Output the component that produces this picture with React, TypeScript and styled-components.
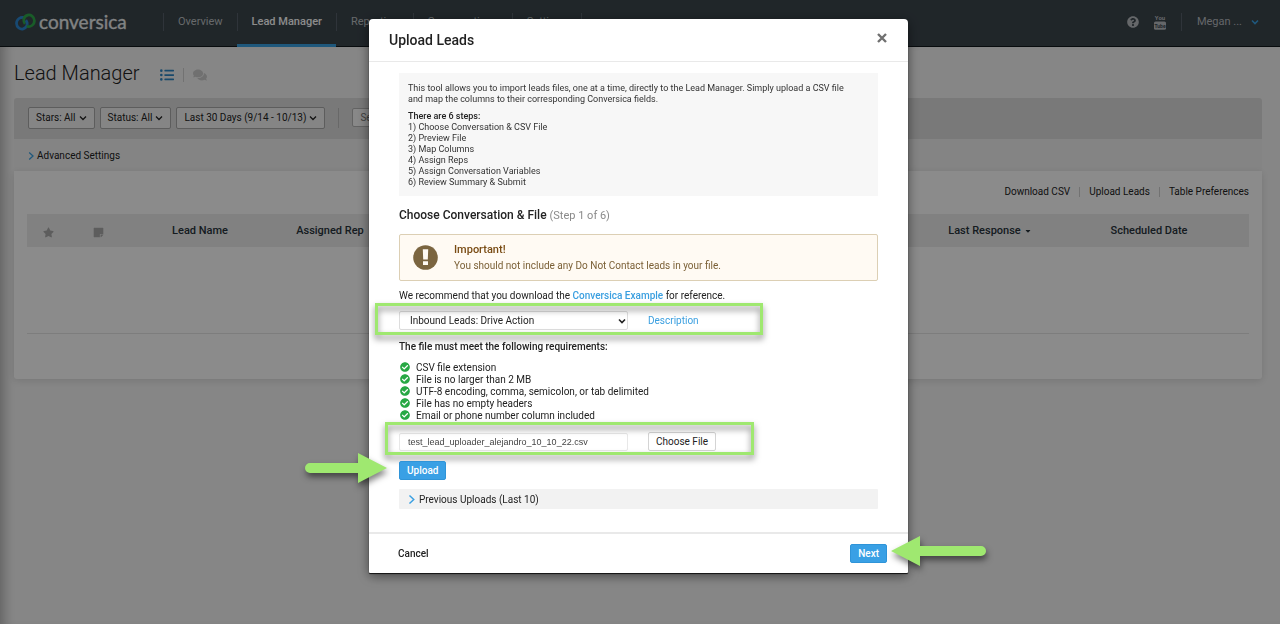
import React from "react";
import styled, { createGlobalStyle, css } from "styled-components";
import {
  FaCaretDown,
  FaCheckCircle,
  FaComments,
  FaListUl,
  FaQuestionCircle,
  FaStar,
  FaStickyNote,
} from "react-icons/fa";

const GlobalStyle = createGlobalStyle`
  *, *::before, *::after { box-sizing: border-box; }
  body {
    margin: 0;
    background: #f5f5f5;
    color: #222;
    font: 10px/12px Roboto, "Liberation Sans", sans-serif;
  }
  button, input, select { font: inherit; color: inherit; margin: 0; }
  button { cursor: pointer; }
  a { color: inherit; text-decoration: none; }
  h1, h2, h3, p, ol, ul { margin: 0; padding: 0; list-style: none; }
  svg { display: block; }
`;

/* ---------- page ---------- */

const Page = styled.div`
  min-height: 100vh;
  display: flex;
  flex-direction: column;
`;

const TopBar = styled.header`
  display: flex;
  align-items: center;
  height: 47px;
  padding: 0 21px 0 15px;
  background: #3b454c;
  border-bottom: 1px solid #10161b;
`;

const Brand = styled.a`
  display: flex;
  align-items: center;
  gap: 3px;
  width: 148px;
  padding-bottom: 3px;
  font-family: Lato, sans-serif;
  font-size: 19px;
  line-height: 24px;
  color: #eceeef;
  -webkit-text-stroke: 0.3px #eceeef;
`;

const Nav = styled.nav`
  display: flex;
  align-self: stretch;
  flex: 1;
`;

const NavLink = styled.a<{ $active?: boolean }>`
  position: relative;
  display: flex;
  align-items: center;
  padding: 0 14px 2px 15px;
  font-size: 11px;
  color: #bcc0c3;
  &::before {
    content: "";
    position: absolute;
    left: 0;
    top: 13px;
    height: 18px;
    border-left: 1px solid #56606a;
  }
  ${(p) =>
    p.$active &&
    css`
      color: #fff;
      font-weight: 500;
      &::after {
        content: "";
        position: absolute;
        inset: auto 0 -1px 0;
        height: 3px;
        background: #3aa0e2;
      }
    `}
`;

const NavEnd = styled.span`
  align-self: flex-start;
  margin-top: 13px;
  height: 18px;
  border-left: 1px solid #56606a;
`;

const Tools = styled.div`
  display: flex;
  align-items: center;
  gap: 15px;
  padding-bottom: 2px;
  color: #b8bcc0;
  font-size: 11px;
`;

const IconLink = styled.a<{ $color?: string }>`
  display: block;
  color: ${(p) => p.$color ?? "inherit"};
`;

const Rule = styled.span<{ $h?: number; $color?: string }>`
  width: 1px;
  height: ${(p) => p.$h ?? 14}px;
  background: ${(p) => p.$color ?? "#cfcfcf"};
`;

const UserButton = styled.button`
  display: flex;
  align-items: center;
  gap: 9px;
  padding: 0;
  border: 0;
  background: none;
`;

const Main = styled.main`
  flex: 1;
  padding: 0 18px 40px 14px;
  box-shadow: inset 12px 0 12px -8px rgba(0, 0, 0, 0.28);
`;

const TitleRow = styled.div`
  display: flex;
  align-items: center;
  gap: 9px;
  height: 51px;
`;

const PageTitle = styled.h1`
  margin-right: 11px;
  font-size: 20px;
  line-height: 24px;
  font-weight: 300;
  color: #222;
`;

const ViewIcons = styled.div`
  display: flex;
  align-items: center;
  gap: 9px;
  padding-top: 5px;
`;

const FilterBar = styled.div`
  display: flex;
  align-items: center;
  gap: 5px;
  height: 41px;
  padding: 0 14px 2px;
  border-radius: 3px 3px 0 0;
  background: #dcdcdc;
`;

const FilterButton = styled.button`
  display: flex;
  align-items: center;
  gap: 3px;
  height: 22px;
  padding: 0 7px;
  border: 1px solid #a9a9a9;
  border-radius: 2px;
  background: #f3f3f3;
  white-space: nowrap;
`;

const FilterRule = styled(Rule)`
  margin: 0 8px;
`;

const SearchInput = styled.input`
  width: 180px;
  height: 19px;
  padding: 0 7px;
  border: 1px solid #b5b5b5;
  border-radius: 2px;
  background: #f7f7f7;
`;

const AdvancedRow = styled.div`
  display: flex;
  align-items: center;
  height: 32px;
  padding: 2px 13px 0;
  background: #f1f1f1;
`;

const Disclosure = styled.button<{ $bar?: boolean }>`
  display: flex;
  align-items: center;
  gap: 2px;
  padding: 0;
  border: 0;
  background: none;
  ${(p) =>
    p.$bar &&
    css`
      width: 100%;
      height: 20px;
      padding: 1px 8px 0;
      gap: 3px;
      background: #f2f2f2;
      border-radius: 1px;
    `}
`;

const Panel = styled.section`
  height: 208px;
  padding: 0 13px;
  border-radius: 0 0 3px 3px;
  background: #fefefe;
  box-shadow: 0 2px 8px rgba(0, 0, 0, 0.12);
`;

const PanelLinks = styled.div`
  display: flex;
  justify-content: flex-end;
  align-items: center;
  gap: 9px;
  height: 43px;
  padding-bottom: 2px;
`;

const LeadTable = styled.table`
  width: 100%;
  table-layout: fixed;
  border-collapse: collapse;
`;

const HeadCell = styled.th<{ $w?: number }>`
  width: ${(p) => (p.$w ? `${p.$w}px` : "auto")};
  height: 33px;
  padding: 0;
  background: #ececec;
  font-size: 11px;
  font-weight: 500;
  color: #28333b;
  white-space: nowrap;
  svg { margin: 3px auto 0; color: #aaa; }
`;

const SortLabel = styled.span`
  display: inline-flex;
  align-items: center;
  gap: 3px;
  svg { margin: 0; color: #28333b; }
`;

const EmptyCell = styled.td`
  height: 86px;
  padding: 0;
  border-bottom: 1px solid #e4e4e4;
`;

/* ---------- dialog ---------- */

const Backdrop = styled.div`
  position: fixed;
  inset: 0;
  overflow: auto;
  display: flex;
  justify-content: center;
  align-items: flex-start;
  padding: 19px 3px 19px 0;
  background: rgba(0, 0, 0, 0.45);
`;

const Dialog = styled.div`
  width: 539px;
  border-radius: 4px 4px 1px 1px;
  background: #fff;
  box-shadow: 0 1px 1px #111, 0 3px 12px rgba(0, 0, 0, 0.5);
`;

const DialogHead = styled.div`
  display: flex;
  align-items: center;
  justify-content: space-between;
  height: 43px;
  padding: 0 21px 0 20px;
  border-bottom: 1px solid #e9e9e9;
`;

const DialogTitle = styled.h2`
  font-size: 14px;
  line-height: 16px;
  font-weight: 500;
`;

const CloseButton = styled.button`
  padding: 0 0 4px;
  border: 0;
  background: none;
  color: #707070;
`;

const DialogBody = styled.div`
  padding: 11px 30px 23px;
`;

const Intro = styled.div`
  padding: 10px 9px 8px;
  background: #f7f7f7;
  font-size: 9px;
  line-height: 11px;
  color: #333;
  p { margin-bottom: 6px; }
  strong { font-weight: 500; color: #222; }
`;

const StepHeading = styled.h3`
  margin: 12px 0 11px;
  font-size: 12px;
  line-height: 14px;
  font-weight: 500;
  small {
    font-size: 11px;
    font-weight: 400;
    color: #8a8a8a;
  }
`;

const Alert = styled.div`
  display: flex;
  align-items: center;
  gap: 16px;
  height: 47px;
  padding: 0 13px;
  border: 1px solid #dccfb4;
  border-radius: 2px;
  background: #fffaf3;
  color: #7a5f35;
  strong {
    display: block;
    margin-bottom: 2px;
    font-size: 11px;
    line-height: 14px;
    font-weight: 500;
    color: #794b13;
  }
  p { line-height: 14px; }
`;

const Note = styled.p`
  margin: 9px 0;
  a { font-weight: 500; color: #3a9fe0; }
`;

const FieldRow = styled.div`
  position: relative;
  display: flex;
  align-items: center;
  gap: 20px;
`;

const Highlight = styled.span<{ $inset: string }>`
  position: absolute;
  inset: ${(p) => p.$inset};
  border: 3px solid #9fe870;
  filter: drop-shadow(0 4px 3px rgba(0, 0, 0, 0.5));
  pointer-events: none;
`;

const SelectWrap = styled.div`
  position: relative;
  display: flex;
  width: 229px;
  svg {
    position: absolute;
    right: 2px;
    top: 6px;
    pointer-events: none;
  }
`;

const Select = styled.select`
  appearance: none;
  width: 100%;
  height: 19px;
  padding: 0 10px;
  border: 1px solid #ddd;
  border-radius: 2px;
  background: #fff;
`;

const TextLink = styled.a`
  color: #3a9fe0;
`;

const Requirements = styled.p`
  margin: 11px 0 9px;
  font-weight: 500;
`;

const CheckList = styled.ul`
  margin-bottom: 10px;
  li {
    display: flex;
    align-items: center;
    gap: 6px;
    padding-left: 1px;
  }
  svg { margin-bottom: 2px; color: #27a844; }
`;

const FileInput = styled.input`
  width: 229px;
  height: 18px;
  padding: 0 8px;
  border: 1px solid #e8e8e8;
  border-radius: 2px;
  background: #fff;
  font-family: "Liberation Sans", Arial, sans-serif;
  font-size: 9px;
  color: #444;
`;

const PlainButton = styled.button`
  height: 19px;
  padding: 0 7px;
  border: 1px solid #d4d4d4;
  border-radius: 2px;
  background: #fff;
`;

const ActionRow = styled.div`
  display: flex;
  margin: 10px 0 9px;
`;

const ButtonWrap = styled.div`
  position: relative;
  display: flex;
`;

const PrimaryButton = styled.button`
  height: 19px;
  padding: 0 7px;
  border: 1px solid #2f94d8;
  border-radius: 2px;
  background: #39a0e5;
  color: #fff;
  font-weight: 500;
`;

const DialogFoot = styled.div`
  display: flex;
  align-items: center;
  justify-content: space-between;
  height: 41px;
  padding: 0 21px 0 29px;
  border-top: 2px solid #e9e9e9;
`;

const CancelButton = styled.button`
  padding: 0;
  border: 0;
  background: none;
  font-weight: 500;
`;

const ArrowMark = styled.svg<{ $side: "left" | "right" }>`
  position: absolute;
  top: -8px;
  overflow: visible;
  pointer-events: none;
  filter: drop-shadow(1px 4px 3px rgba(0, 0, 0, 0.5));
  ${(p) =>
    p.$side === "left"
      ? css`right: calc(100% + 12px);`
      : css`left: calc(100% + 4px);`}
`;

/* ---------- drawings ---------- */

const Chevron = ({ dir, size = 8, color = "currentColor", weight = 1.6 }: {
  dir: "down" | "right"; size?: number; color?: string; weight?: number;
}) => (
  <svg width={size} height={size} viewBox="0 0 8 8" fill="none" stroke={color} strokeWidth={weight} aria-hidden>
    <path d={dir === "down" ? "M1 2.5 4 5.5 7 2.5" : "M2.2 0.5 6 4 2.2 7.5"} />
  </svg>
);

const LogoMark = () => (
  <svg width="21" height="18" viewBox="0 0 21 18" fill="none" strokeWidth="2.7" aria-hidden>
    <path d="M9.3 4.6C5.6 3.4 1.4 6.2 1.5 10.4C1.6 14.4 5.2 16.6 8.2 15.9C10.6 15.3 12 13.4 12.2 11.2" stroke="#2a86d0" />
    <path d="M11.6 13.3C15.4 14.6 19.5 11.8 19.4 7.6C19.3 3.6 15.7 1.4 12.7 2.1C10.3 2.7 8.9 4.6 8.7 6.8" stroke="#2fa84a" />
    <path d="M8.7 6.6C8.6 8.4 9 9.6 10 10.9" stroke="#2fa84a" />
    <path d="M12.2 11.4C12.3 9.6 11.9 8.4 10.9 7.1" stroke="#2a86d0" />
  </svg>
);

const VideoIcon = () => (
  <svg width="12" height="15" viewBox="0 0 12 15" fontFamily="Roboto, sans-serif" fontWeight="700" textAnchor="middle" aria-hidden>
    <text x="6" y="5" fontSize="6" fill="currentColor">You</text>
    <rect x="0" y="6.4" width="12" height="8.4" rx="1.6" fill="currentColor" />
    <text x="6" y="12.6" fontSize="5" fill="#3b454c">Tube</text>
  </svg>
);

const AlertIcon = () => (
  <svg width="25" height="25" viewBox="0 0 25 25" aria-hidden>
    <circle cx="12.5" cy="12.5" r="12.3" fill="#7b6540" />
    <path d="M9.8 4.3H15.2L14.8 14.6H10.2ZM10 16.3H15V19.9H10Z" fill="#fffaf3" />
  </svg>
);

const steps = [
  "Choose Conversation & CSV File",
  "Preview File",
  "Map Columns",
  "Assign Reps",
  "Assign Conversation Variables",
  "Review Summary & Submit",
];

const requirements = [
  "CSV file extension",
  "File is no larger than 2 MB",
  "UTF-8 encoding, comma, semicolon, or tab delimited",
  "File has no empty headers",
  "Email or phone number column included",
];

const filters = ["Stars: All", "Status: All", "Last 30 Days (9/14 - 10/13)"];

export default function App() {
  return (
    <>
      <GlobalStyle />
      <Page>
        <TopBar>
          <Brand href="#"><LogoMark />conversica</Brand>
          <Nav>
            <NavLink href="#">Overview</NavLink>
            <NavLink href="#" $active>Lead Manager</NavLink>
            <NavLink href="#">Reporting</NavLink>
            <NavLink href="#">Conversations</NavLink>
            <NavLink href="#">Settings</NavLink>
            <NavEnd />
          </Nav>
          <Tools>
            <IconLink href="#" aria-label="Help"><FaQuestionCircle size={12} /></IconLink>
            <IconLink href="#" aria-label="Videos"><VideoIcon /></IconLink>
            <Rule $h={18} $color="#56606a" />
            <UserButton>Megan ... <Chevron dir="down" color="#3aa0e2" /></UserButton>
          </Tools>
        </TopBar>
        <Main>
          <TitleRow>
            <PageTitle>Lead Manager</PageTitle>
            <ViewIcons>
              <IconLink href="#" aria-label="List view" $color="#2f86c4"><FaListUl size={14} /></IconLink>
              <Rule />
              <IconLink href="#" aria-label="Messages view" $color="#cdcdcd"><FaComments size={14} /></IconLink>
            </ViewIcons>
          </TitleRow>
          <FilterBar>
            {filters.map((f) => (
              <FilterButton key={f}>{f}<Chevron dir="down" weight={1.3} /></FilterButton>
            ))}
            <FilterRule $h={20} $color="#bdbdbd" />
            <SearchInput aria-label="Search" placeholder="Search" />
          </FilterBar>
          <AdvancedRow>
            <Disclosure><Chevron dir="right" color="#3aa0e2" weight={1.3} />Advanced Settings</Disclosure>
          </AdvancedRow>
          <Panel>
            <PanelLinks>
              <a href="#">Download CSV</a>
              <Rule $h={10} />
              <a href="#">Upload Leads</a>
              <Rule $h={10} />
              <a href="#">Table Preferences</a>
            </PanelLinks>
            <LeadTable>
              <thead>
                <tr>
                  <HeadCell $w={42} aria-label="Starred"><FaStar size={11} /></HeadCell>
                  <HeadCell $w={58} aria-label="Notes"><FaStickyNote size={11} /></HeadCell>
                  <HeadCell $w={146}>Lead Name</HeadCell>
                  <HeadCell $w={114}>Assigned Rep</HeadCell>
                  <HeadCell />
                  <HeadCell $w={118}><SortLabel>Last Response <FaCaretDown size={8} /></SortLabel></HeadCell>
                  <HeadCell $w={200}>Scheduled Date</HeadCell>
                </tr>
              </thead>
              <tbody>
                <tr><EmptyCell colSpan={7} /></tr>
              </tbody>
            </LeadTable>
          </Panel>
        </Main>
      </Page>

      <Backdrop>
        <Dialog role="dialog" aria-modal="true" aria-labelledby="dialog-title">
          <DialogHead>
            <DialogTitle id="dialog-title">Upload Leads</DialogTitle>
            <CloseButton aria-label="Close">
              <svg width="10" height="10" viewBox="0 0 10 10" stroke="currentColor" strokeWidth="2.4">
                <path d="M1 1 9 9M9 1 1 9" />
              </svg>
            </CloseButton>
          </DialogHead>
          <DialogBody>
            <Intro>
              <p>
                This tool allows you to import leads files, one at a time, directly to the Lead Manager. Simply upload a CSV file
                <br />
                and map the columns to their corresponding Conversica fields.
              </p>
              <strong>There are 6 steps:</strong>
              <ol>
                {steps.map((s, i) => <li key={s}>{`${i + 1}) ${s}`}</li>)}
              </ol>
            </Intro>
            <StepHeading>Choose Conversation &amp; File <small>(Step 1 of 6)</small></StepHeading>
            <Alert role="note">
              <AlertIcon />
              <div>
                <strong>Important!</strong>
                <p>You should not include any Do Not Contact leads in your file.</p>
              </div>
            </Alert>
            <Note>We recommend that you download the <a href="#">Conversica Example</a> for reference.</Note>
            <FieldRow>
              <SelectWrap>
                <Select aria-label="Conversation" defaultValue="inbound">
                  <option value="inbound">Inbound Leads: Drive Action</option>
                </Select>
                <Chevron dir="down" />
              </SelectWrap>
              <TextLink href="#">Description</TextLink>
              <Highlight $inset="-8px 115px -5px -24px" />
            </FieldRow>
            <Requirements>The file must meet the following requirements:</Requirements>
            <CheckList>
              {requirements.map((r) => <li key={r}><FaCheckCircle size={10} />{r}</li>)}
            </CheckList>
            <FieldRow>
              <FileInput aria-label="File name" readOnly value="test_lead_uploader_alejandro_10_10_22.csv" />
              <PlainButton>Choose File</PlainButton>
              <Highlight $inset="-10px 124px -4px -14px" />
            </FieldRow>
            <ActionRow>
              <ButtonWrap>
                <PrimaryButton>Upload</PrimaryButton>
                <ArrowMark $side="left" width="82" height="30" viewBox="0 0 82 30" aria-hidden>
                  <path d="M5 10H53V0L82 15 53 30V20H5A5 5 0 0 1 5 10Z" fill="#9fe870" />
                </ArrowMark>
              </ButtonWrap>
            </ActionRow>
            <Disclosure $bar><Chevron dir="right" color="#3aa0e2" size={9} weight={1.3} />Previous Uploads (Last 10)</Disclosure>
          </DialogBody>
          <DialogFoot>
            <CancelButton>Cancel</CancelButton>
            <ButtonWrap>
              <PrimaryButton>Next</PrimaryButton>
              <ArrowMark $side="right" width="95" height="30" viewBox="0 0 95 30" aria-hidden>
                <path d="M90 10H29V0L0 15 29 30V20H90A5 5 0 0 0 90 10Z" fill="#9fe870" />
              </ArrowMark>
            </ButtonWrap>
          </DialogFoot>
        </Dialog>
      </Backdrop>
    </>
  );
}
